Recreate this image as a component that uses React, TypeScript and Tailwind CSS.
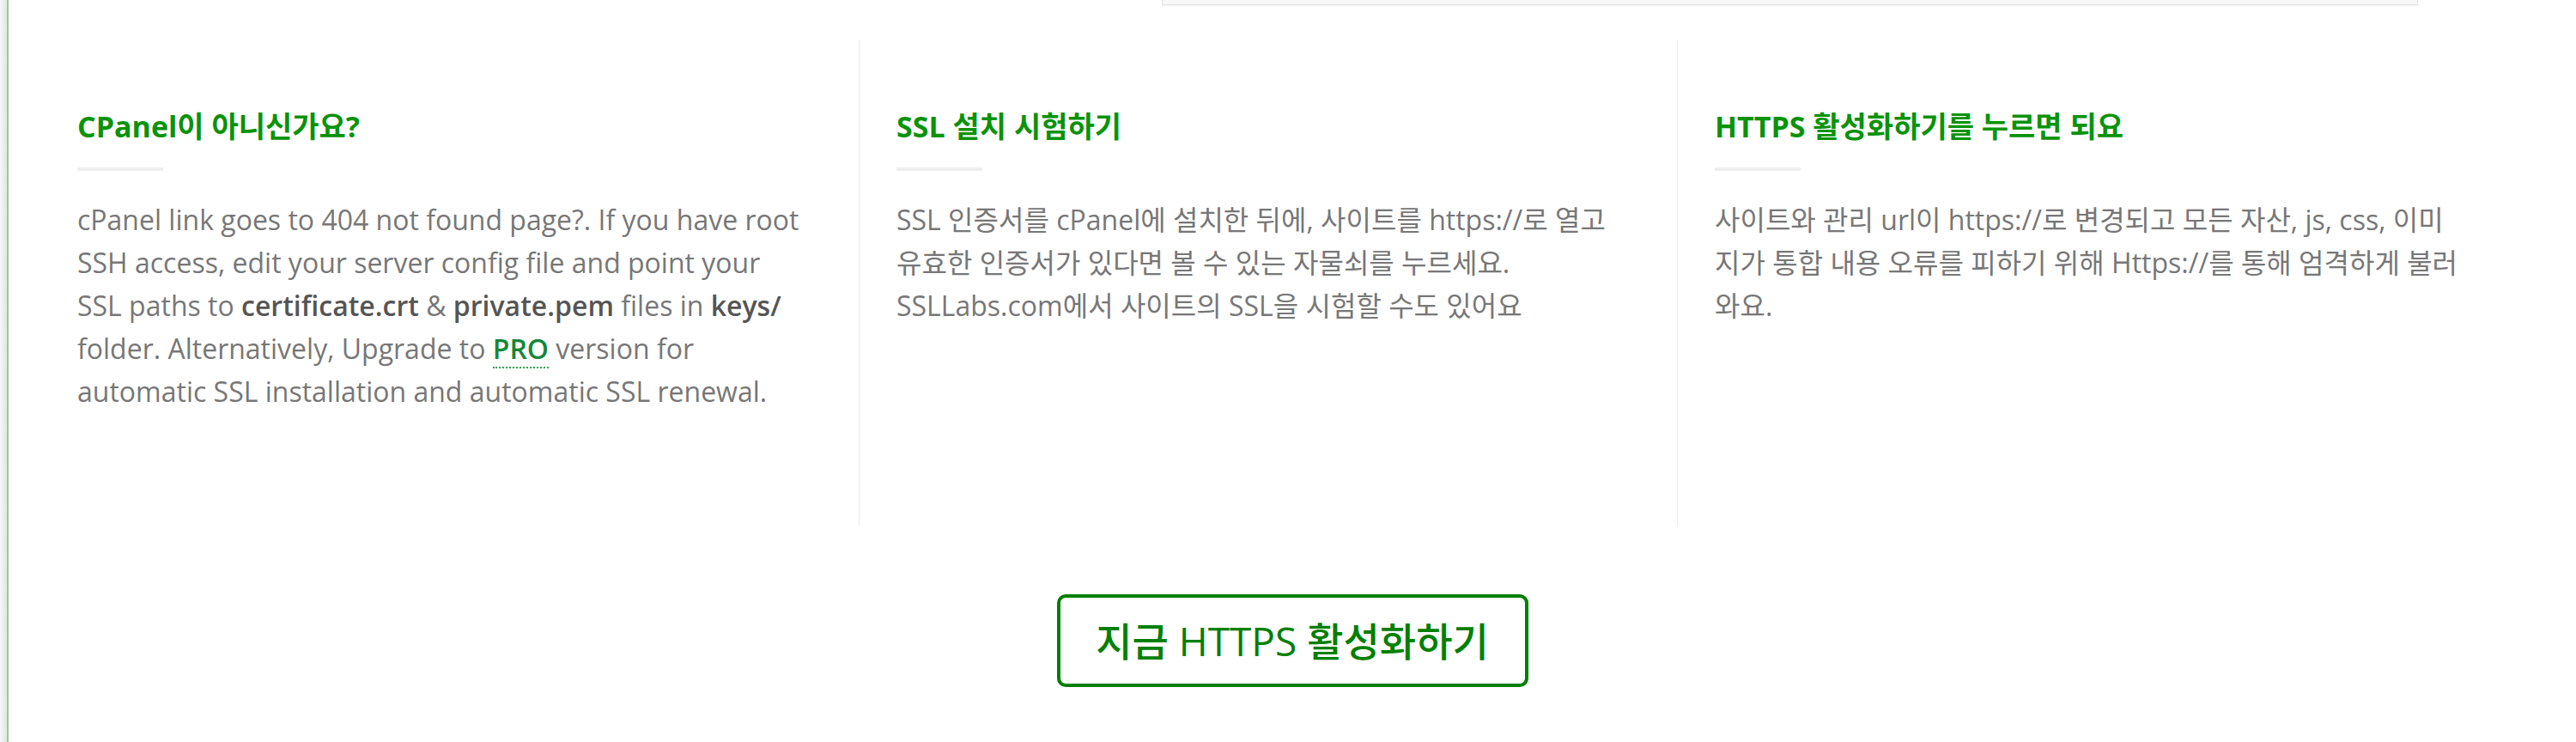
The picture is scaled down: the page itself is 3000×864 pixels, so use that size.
const FONT = "font-['Open_Sans','Noto_Sans_CJK_KR',sans-serif]";

type Step = {
  title: string;
  body: React.ReactNode;
  first?: boolean;
};

function Bold({ children }: { children: React.ReactNode }) {
  return <b className="font-semibold text-[#555555]">{children}</b>;
}

const STEPS: Step[] = [
  {
    title: 'CPanel이 아니신가요?',
    first: true,
    body: (
      <>
        cPanel link goes to 404 not found page?. If you have root
        <br />
        SSH access, edit your server config file and point your
        <br />
        SSL paths to <Bold>certificate.crt</Bold> &amp; <Bold>private.pem</Bold> files in <Bold>keys/</Bold>
        <br />
        folder. Alternatively, Upgrade to{' '}
        <a className="font-semibold text-[#15873a] border-b-2 border-dotted border-[#2fa34f]">PRO</a> version for
        <br />
        automatic SSL installation and automatic SSL renewal.
      </>
    ),
  },
  {
    title: 'SSL 설치 시험하기',
    body: (
      <>
        SSL 인증서를 cPanel에 설치한 뒤에, 사이트를 https://로 열고
        <br />
        유효한 인증서가 있다면 볼 수 있는 자물쇠를 누르세요.
        <br />
        SSLLabs.com에서 사이트의 SSL을 시험할 수도 있어요
      </>
    ),
  },
  {
    title: 'HTTPS 활성화하기를 누르면 되요',
    body: (
      <>
        사이트와 관리 url이 https://로 변경되고 모든 자산, js, css, 이미
        <br />
        지가 통합 내용 오류를 피하기 위해 Https://를 통해 엄격하게 불러
        <br />
        와요.
      </>
    ),
  },
];

export default function App() {
  return (
    <div className={`flex min-h-[864px] bg-white ${FONT}`}>
      {/* 왼쪽 가장자리 */}
      <div className="w-[8px] shrink-0 bg-linear-to-r from-[#f7f8f7] to-[#e1e7e0]" />
      <div className="w-[2px] shrink-0 bg-[#9dcb99]" />

      <main className="flex-1 flex flex-col">
        {/* 위쪽 박스 끝부분 */}
        <div className="ml-[1343px] w-[1463px] h-[6px] bg-[#f7f7f7] border-x border-b border-[#e3e3e3] shadow-[0_1px_2px_rgba(0,0,0,0.06)]" />

        <div className="mt-[40px] ml-[37px] flex">
          {STEPS.map((step) => (
            <section
              key={step.title}
              className={`w-[953px] h-[566px] px-[43px] pt-[80px] ${step.first ? '' : 'border-l border-[#ebebeb]'}`}
            >
              <h3 className="text-[34px] leading-[42px] font-bold text-[#0a930a] whitespace-nowrap">{step.title}</h3>
              <div className="mt-[27px] w-[100px] h-[4px] bg-[#eeeeee]" />
              <p className="mt-[32px] text-[32px] leading-[50px] text-[#777777] whitespace-nowrap">{step.body}</p>
            </section>
          ))}
        </div>

        <div className="mt-[80px] flex justify-center">
          <button className="w-[549px] h-[108px] rounded-[10px] border-4 border-[#008000] text-[46px] font-medium text-[#008000] bg-white flex items-center justify-center">
            지금 HTTPS 활성화하기
          </button>
        </div>
      </main>
    </div>
  );
}
